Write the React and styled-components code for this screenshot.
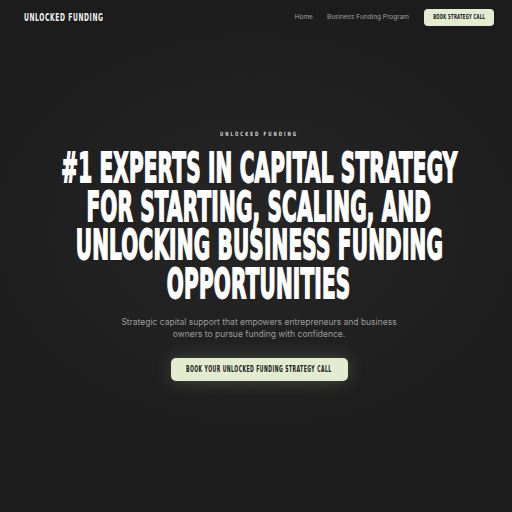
import React from 'react';
import styled, { createGlobalStyle } from 'styled-components';

const GlobalStyle = createGlobalStyle`
  html, body {
    margin: 0;
    padding: 0;
    background: #1c1c1c;
  }
  * {
    box-sizing: border-box;
  }
`;

const Page = styled.div`
  width: 512px;
  height: 512px;
  overflow: hidden;
  background: radial-gradient(ellipse 60% 45% at 50% 45%, #262626 0%, #1c1c1c 100%);
  font-family: Inter, 'Liberation Sans', sans-serif;
  display: flex;
  flex-direction: column;
`;

// the reference uses a tall condensed display face; squeeze DejaVu Sans Bold to match
const Condensed = styled.span`
  display: inline-block;
  white-space: nowrap;
  font-family: 'DejaVu Sans', sans-serif;
  font-weight: 700;
  transform: scaleX(${(p) => p.$scale || 0.6});
  transform-origin: ${(p) => p.$origin || 'center'};
`;

const Navbar = styled.nav`
  display: flex;
  align-items: center;
  justify-content: space-between;
  height: 34px;
  padding: 0 18px 0 24px;
`;

const Logo = styled.div`
  font-size: 10px;
  letter-spacing: 1px;
  color: #f2f2f2;
  width: 80px;
`;

const NavLinks = styled.div`
  display: flex;
  align-items: center;
  gap: 14px;
`;

const NavLink = styled.a`
  font-size: 6.5px;
  color: #a0a0a0;
  text-decoration: none;
`;

const PillButton = styled.button`
  display: flex;
  align-items: center;
  justify-content: center;
  padding: 0;
  overflow: visible;
  color: #151515;
  background: #e3ecd1;
  border: none;
  border-radius: ${(p) => (p.$large ? '5px' : '4px')};
  font-size: ${(p) => (p.$large ? '8px' : '7px')};
  letter-spacing: ${(p) => (p.$large ? '0.8px' : '0.5px')};
  width: ${(p) => (p.$large ? '177px' : '70px')};
  height: ${(p) => (p.$large ? '23px' : '17px')};
  margin-left: ${(p) => (p.$large ? '0' : '1px')};
  box-shadow: ${(p) => (p.$large ? '0 0 18px rgba(215, 235, 190, 0.22)' : 'none')};
`;

const Hero = styled.main`
  display: flex;
  flex-direction: column;
  align-items: center;
  padding: 96px 0 0 6px;
`;

const Eyebrow = styled.div`
  font-size: 6px;
  line-height: 7px;
  letter-spacing: 3px;
  color: #d8d8d8;
`;

const Heading = styled.h1`
  margin: 12px 0 0;
  display: flex;
  flex-direction: column;
  align-items: center;
  font-size: 40px;
  line-height: 38.5px;
  letter-spacing: 0.4px;
  font-weight: 700;
  color: #ffffff;
  -webkit-text-stroke: 1.8px #ffffff;
`;

const Sub = styled.p`
  margin: 13px 0 0;
  width: 300px;
  font-size: 8.5px;
  line-height: 12px;
  text-align: center;
  color: #9c9c9c;
`;

const CtaRow = styled.div`
  margin-top: 18px;
`;

const headingLines = [
  '#1 EXPERTS IN CAPITAL STRATEGY',
  'FOR STARTING, SCALING, AND',
  'UNLOCKING BUSINESS FUNDING',
  'OPPORTUNITIES',
];

export default function App() {
  return (
    <>
      <GlobalStyle />
      <Page>
        <Navbar>
          <Logo>
            <Condensed $scale={0.6} $origin="left">UNLOCKED FUNDING</Condensed>
          </Logo>
          <NavLinks>
            <NavLink href="#">Home</NavLink>
            <NavLink href="#">Business Funding Program</NavLink>
            <PillButton>
              <Condensed $scale={0.54}>BOOK STRATEGY CALL</Condensed>
            </PillButton>
          </NavLinks>
        </Navbar>
        <Hero>
          <Eyebrow>
            <Condensed $scale={0.66}>UNLOCKED FUNDING</Condensed>
          </Eyebrow>
          <Heading>
            {headingLines.map((line) => (
              <Condensed key={line} $scale={0.5}>
                {line}
              </Condensed>
            ))}
          </Heading>
          <Sub>
            Strategic capital support that empowers entrepreneurs and business
            owners to pursue funding with confidence.
          </Sub>
          <CtaRow>
            <PillButton $large>
              <Condensed $scale={0.57}>BOOK YOUR UNLOCKED FUNDING STRATEGY CALL</Condensed>
            </PillButton>
          </CtaRow>
        </Hero>
      </Page>
    </>
  );
}
